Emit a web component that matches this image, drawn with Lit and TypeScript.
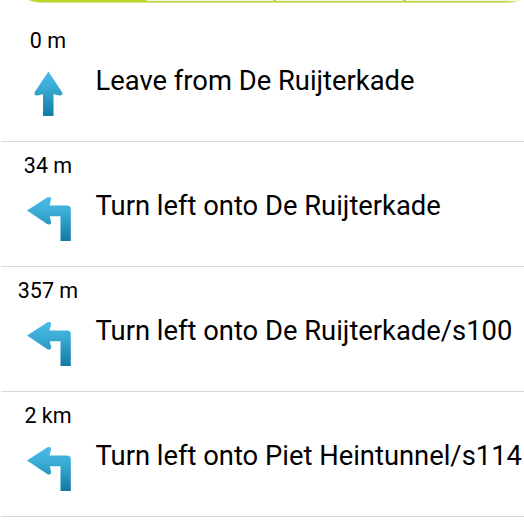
import { LitElement, html, css, svg } from "lit";
import { customElement } from "lit/decorators.js";

interface Step { distance: string; label: string; turn: "straight" | "left"; }

const STEPS: Step[] = [
  { distance: "0 m", label: "Leave from De Ruijterkade", turn: "straight" },
  { distance: "34 m", label: "Turn left onto De Ruijterkade", turn: "left" },
  { distance: "357 m", label: "Turn left onto De Ruijterkade/s100", turn: "left" },
  { distance: "2 km", label: "Turn left onto Piet Heintunnel/s114", turn: "left" },
];

const PATHS = {
  straight: "M25.4 4.500 L39 25 Q40.200 28.500 37 28.600 Q34 28 30.500 27 V49 H20 V27 Q17 28 14 28.600 Q10.500 28.500 11.800 25 Z",
  left: "M4 18.600 L24.500 5.200 Q28.500 4 28 7.500 L26.500 13.400 H44 Q47.800 13.400 47.800 17 V49 H37.500 V24.300 H26.800 L28 29.500 Q28.500 33.500 24.500 32.200 Z",
};

@customElement("app-root")
export class AppRoot extends LitElement {
  static styles = css`
    :host { display: block; height: 522px; overflow: hidden; background: #fff; color: #000; font-family: Roboto, sans-serif; }
    .tabs { height: 3px; margin: 0 3px 14px 27px; overflow: hidden; display: flex; flex-direction: column; justify-content: flex-end; }
    .bar { box-sizing: border-box; flex: none; display: grid; grid-template-columns: 120px 129px 130px 1fr; height: 30px; border-bottom: 1px solid #d5e68c; border-radius: 0 0 16px 16px / 0 0 5px 5px; overflow: hidden; background: #f6fadb; }
    .tab { border-bottom: 1px solid #bfd655; box-shadow: inset -3px 0 #c0da3c; }
    .tab:last-child { box-shadow: none; }
    .tab.active { background: #bad72c; border-color: #bad72c; }
    .step { display: grid; grid-template-columns: 94px 1fr; height: 124px; margin-left: 1px; border-bottom: 1px solid #d9d9d9; }
    .side { display: flex; flex-direction: column; align-items: center; }
    .distance { font-size: 21.5px; line-height: 25px; margin-top: 11px; white-space: nowrap; }
    .icon { width: 50px; height: 52px; margin-top: 14px; }
    .label { font-size: 27.36px; line-height: 32px; padding: 48px 0 0 0.5px; white-space: nowrap; transform: scaleY(1.04); transform-origin: 0 73.3px; }
  `;
  render() {
    return html`<div class="tabs"><div class="bar"><div class="tab active"></div><div class="tab"></div><div class="tab"></div><div class="tab"></div></div></div><main>${STEPS.map((s) => html`
      <section class="step"><div class="side"><span class="distance">${s.distance}</span>
      <svg class="icon" viewBox="0 0 50 52"><defs><linearGradient id="g" x2="0" y2="1"><stop stop-color="#4bbce8"/><stop offset=".35" stop-color="#3aacd6"/><stop offset="1" stop-color="#117aa4"/></linearGradient></defs>${svg`<path fill="url(#g)" d=${PATHS[s.turn]} />`}</svg></div>
      <div class="label">${s.label}</div></section>`)}</main>`;
  }
}
